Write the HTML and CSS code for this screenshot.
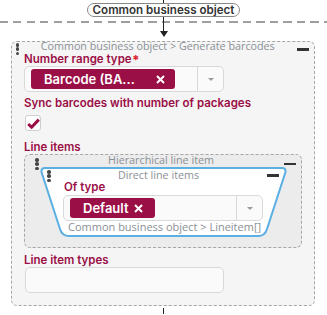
FILE: index.html
```html
<!DOCTYPE html>
<html lang="en">
<head>
    <meta charset="UTF-8">
    <title>Generate barcodes</title>
    <link rel="stylesheet" href="styles.css">
</head>
<body>
    <div class="top">
        <div class="wire short"></div>
        <div class="pill">Common business object</div>
        <div class="wire long"></div>
        <div class="arrow"></div>
    </div>

    <div class="node">
        <div class="node-head">
            <span class="handle"><i></i><i></i><i></i></span>
            <span class="node-title">Common business object &gt; Generate barcodes</span>
            <span class="minus"></span>
        </div>

        <div class="label">Number range type<span class="req">*</span></div>
        <div class="select">
            <span class="chip wide">
                <span class="chip-text">Barcode (BA...</span>
                <svg class="x" width="9" height="9" viewBox="0 0 9 9"><path d="M1 1 L8 8 M8 1 L1 8" stroke="#fff" stroke-width="2"/></svg>
            </span>
            <span class="caret-box"><span class="caret"></span></span>
        </div>

        <div class="label sync">Sync barcodes with number of packages</div>
        <div class="checkbox">
            <svg width="13" height="11" viewBox="0 0 13 11"><path d="M1.2 6 L4.6 9.2 L11.8 1.6" fill="none" stroke="#9b0f47" stroke-width="3"/></svg>
        </div>

        <div class="label items">Line items</div>
        <div class="group">
            <div class="node-head">
                <span class="handle"><i></i><i></i><i></i></span>
                <span class="node-title">Hierarchical line item</span>
                <span class="minus"></span>
            </div>
            <div class="direct">
                <svg class="shape" width="247" height="70" viewBox="0 0 247 70">
                    <path d="M5 1 H242 Q246 1 245.5 5 L227 62 Q225 69 218 69 H29 Q22 69 20 62 L1.5 5 Q1 1 5 1 Z" fill="#fff" stroke="#5aafe3" stroke-width="2"/>
                </svg>
                <div class="node-head">
                    <span class="handle"><i></i><i></i><i></i></span>
                    <span class="node-title">Direct line items</span>
                    <span class="minus"></span>
                </div>
                <div class="direct-body">
                    <div class="label">Of type</div>
                    <div class="select">
                        <span class="chip">
                            <span class="chip-text">Default</span>
                            <svg class="x" width="9" height="9" viewBox="0 0 9 9"><path d="M1 1 L8 8 M8 1 L1 8" stroke="#fff" stroke-width="2"/></svg>
                        </span>
                        <span class="caret-box"><span class="caret"></span></span>
                    </div>
                    <div class="path">Common business object &gt; Lineitem[]</div>
                </div>
            </div>
        </div>

        <div class="label types">Line item types</div>
        <div class="input"></div>
    </div>

    <div class="bottom"><div class="tick"></div></div>
</body>
</html>
```

FILE: styles.css
```css
body {
    margin: 0;
    background: #fff;
    font-family: "Open Sans", sans-serif;
}
.top {
    position: relative;
    height: 41px;
    display: flex;
    flex-direction: column;
    align-items: center;
}
.top::before {
    content: "";
    position: absolute;
    left: 0;
    right: 0;
    top: 21px;
    height: 2px;
    background: repeating-linear-gradient(90deg, #9e9e9e 0 8px, transparent 8px 13.5px);
}
.wire {
    width: 1.5px;
    background: #222;
    position: relative;
}
.wire.short { height: 3px; }
.wire.long { height: 14px; }
.pill {
    font-family: Inter, sans-serif;
    font-weight: 600;
    font-size: 11.6px;
    color: #333;
    border: 1px solid #888;
    border-radius: 7px;
    padding: 0 4.5px;
    height: 12px;
    line-height: 12px;
    background: #fff;
    position: relative;
}
.arrow {
    width: 0;
    height: 0;
    border-left: 4.5px solid transparent;
    border-right: 4.5px solid transparent;
    border-top: 6px solid #222;
}
.node {
    margin: 0 12px 0 11px;
    border: 1px dashed #a6a6a6;
    border-radius: 6px;
    background: #f5f5f5;
    padding: 0 12px 12px;
}
.node-head {
    display: flex;
    align-items: flex-start;
    margin: 0 -12px;
    padding: 0 5px 0 3.5px;
    height: 10px;
}
.handle {
    display: flex;
    flex-direction: column;
    gap: 0.75px;
    width: 3.5px;
    margin-top: 1px;
}
.handle i {
    display: block;
    width: 3.5px;
    height: 3.5px;
    border-radius: 50%;
    background: #464646;
}
.node-title {
    flex: 1;
    text-align: center;
    font-size: 10.75px;
    line-height: 10px;
    color: #8a9096;
    white-space: nowrap;
    margin-top: -1.5px;
}
.minus {
    width: 12.5px;
    height: 3px;
    background: #333;
    margin-top: 6px;
}
.label {
    font-family: Inter, sans-serif;
    font-weight: 600;
    font-size: 11.5px;
    color: #9b0f47;
    height: 12px;
    line-height: 12px;
    white-space: nowrap;
}
.label.sync { margin-top: 5px; }
.label.items { margin-top: 10px; }
.label.types { margin-top: 6px; }
.req {
    position: relative;
    top: 2px;
    color: #dc1f2f;
    font-size: 13px;
    font-weight: 800;
    margin-left: 0.5px;
}
.select {
    display: flex;
    align-items: center;
    width: 192px;
    height: 24px;
    border: 1px solid #d9d9d9;
    border-radius: 5px;
    background: #fafafa;
    margin-top: 2px;
    padding-left: 6px;
}
.chip {
    display: flex;
    align-items: center;
    box-sizing: border-box;
    background: #9b0f47;
    color: #fff;
    font-family: Inter, sans-serif;
    font-weight: 600;
    font-size: 13px;
    height: 20px;
    border-radius: 3px;
    padding: 0 12px 0 13px;
}
.chip.wide {
    width: 144px;
    padding-right: 10px;
}
.chip-text { flex: 1; }
.x { margin-left: 5px; }
.caret-box {
    margin-left: auto;
    width: 25px;
    height: 24px;
    border-left: 1px solid #d9d9d9;
    display: flex;
    align-items: center;
    justify-content: center;
}
.caret {
    border-left: 3.5px solid transparent;
    border-right: 3.5px solid transparent;
    border-top: 3.5px solid #9a9a9a;
}
.checkbox {
    width: 14px;
    height: 14px;
    border: 1px solid #cfcfcf;
    border-radius: 3px;
    background: #fff;
    margin: 6px 0 0 1px;
    display: flex;
    align-items: center;
    justify-content: center;
}
.group {
    margin-top: 1px;
    border: 1px dashed #a6a6a6;
    border-radius: 6px;
    background: #ececec;
    padding: 0 14px 10px 15px;
}
.group .node-head {
    margin: 0 -14px 0 -15px;
    padding: 0 5px 0 10px;
    height: 12px;
}
.group .handle { margin-top: 3px; }
.group .node-title { margin-top: 0; }
.group .minus { margin-top: 7.5px; height: 2.5px; }
.direct {
    position: relative;
    height: 70px;
}
.shape {
    position: absolute;
    left: 0;
    top: 0;
}
.direct .node-head {
    position: relative;
    margin: 0;
    padding: 0 8px 0 7px;
    height: 14px;
}
.direct .handle { margin-top: 3px; }
.direct .node-title { margin-top: 3px; }
.direct .minus { margin-top: 7px; }
.direct-body {
    position: relative;
    padding-left: 23px;
}
.direct-body .label { margin-left: 1px; }
.path {
    font-size: 11px;
    line-height: 12px;
    color: #8a9096;
    margin-left: 5px;
    white-space: nowrap;
}
.input {
    width: 197px;
    height: 24px;
    border: 1px solid #d9d9d9;
    border-radius: 5px;
    background: #fafafa;
    margin: 1px 0 0 1px;
}
.bottom {
    display: flex;
    justify-content: center;
    padding-top: 2px;
}
.tick {
    width: 1.5px;
    height: 6px;
    background: #222;
}
```
